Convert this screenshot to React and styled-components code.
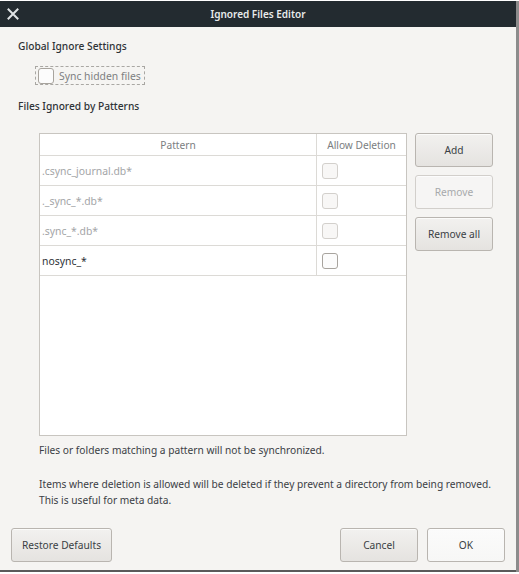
import React from "react";
import styled, { createGlobalStyle } from "styled-components";

const Global = createGlobalStyle`
  html, body { margin: 0; padding: 0; background: #8c8c8c; }
  body { font-family: "Noto Sans", "DejaVu Sans", sans-serif; }
  * { box-sizing: border-box; }
`;

const Frame = styled.div`
  width: 519px;
  height: 574px;
  padding-top: 1px;
  background: #ffffff;
  display: flex;
  flex-direction: column;
`;

const Window = styled.div`
  width: 516px;
  height: 571px;
  display: flex;
  flex-direction: column;
  background: #f5f4f2;
  border-bottom: 2px solid #5a5a5a;
  box-shadow: 3px 0 0 #8c8c8c;
`;

const TitleBar = styled.div`
  height: 26px;
  background: #232b30;
  display: grid;
  grid-template-columns: 40px 1fr 40px;
  align-items: center;
  color: #e8eaeb;
  font-size: 10px;
  font-weight: 600;
`;

const CloseBtn = styled.div`
  display: flex;
  align-items: center;
  padding-left: 7px;
`;

const Title = styled.div`
  text-align: center;
`;

const Body = styled.div`
  flex: 1;
  display: flex;
  flex-direction: column;
  padding: 11px 11px 0 18px;
  color: #31363b;
  font-size: 10.3px;
`;

const Heading = styled.div`
  font-size: 10.2px;
  font-weight: 500;
  height: 16px;
  line-height: 16px;
  color: #2e3236;
`;

const CheckRow = styled.div`
  margin: 12px 0 13px 17px;
  display: inline-flex;
  align-self: flex-start;
  align-items: center;
  gap: 5px;
  padding: 1px 3px 1px 2px;
  border: 1px dashed #a9a7a3;
  height: 19px;
  color: #7d7f81;
  font-size: 10.4px;
`;

const Box = styled.span`
  width: 16px;
  height: 16px;
  border: 1px solid ${(p) => (p.$dim ? "#d3d0cc" : "#a8a49e")};
  border-radius: 3px;
  background: ${(p) => (p.$dim ? "#f8f7f6" : "#fcfcfc")};
  display: inline-block;
  flex-shrink: 0;
`;

const MainRow = styled.div`
  display: flex;
  gap: 8px;
  margin: 19px 0 0 21px;
`;

const Table = styled.div`
  width: 368px;
  height: 303px;
  background: #ffffff;
  border: 1px solid #c8c5c0;
  display: flex;
  flex-direction: column;
`;

const Row = styled.div`
  display: grid;
  grid-template-columns: 277px 89px;
  height: ${(p) => (p.$head ? "22px" : "30px")};
  border-bottom: 1px solid #dcdad6;
`;

const Cell = styled.div`
  display: flex;
  align-items: center;
  justify-content: ${(p) => (p.$center ? "center" : "flex-start")};
  padding-left: ${(p) => (p.$center ? "0" : "2px")};
  border-right: ${(p) => (p.$last ? "none" : "1px solid #dcdad6")};
  font-size: 10.4px;
  color: ${(p) => (p.$dim ? "#a3a5a7" : "#2e3236")};
`;

const HeadCell = styled(Cell)`
  color: #7b7e81;
  font-size: 10.2px;
`;

const BoxCell = styled.div`
  display: flex;
  align-items: center;
  padding-left: 5px;
`;

const SideButtons = styled.div`
  display: flex;
  flex-direction: column;
  gap: 8px;
`;

const Button = styled.button`
  width: ${(p) => p.$w || 78}px;
  height: 34px;
  border: 1px solid ${(p) => (p.disabled ? "#d2cfcb" : "#b9b5b0")};
  border-radius: 3px;
  background: ${(p) =>
    p.disabled
      ? "#f6f5f4"
      : p.$light
      ? "linear-gradient(#fbfbfb, #f7f7f6)"
      : "linear-gradient(#f2f1ef, #e5e3e0)"};
  color: ${(p) => (p.disabled ? "#a7a9ab" : "#3a3f44")};
  font-family: "Noto Sans", "DejaVu Sans", sans-serif;
  font-size: 10.2px;
  padding: 0;
  box-shadow: inset 0 1px 0 rgba(255,255,255,0.7);
`;

const Note = styled.div`
  margin-left: 21px;
  font-size: 10.2px;
  line-height: 16px;
  color: #3b4045;
`;

const Footer = styled.div`
  margin-top: auto;
  display: flex;
  align-items: center;
  gap: 9px;
  padding: 0 0 8px 0;
  margin-left: -7px;
`;

const Spacer = styled.div`
  flex: 1;
`;

const rows = [
  { p: ".csync_journal.db*", dim: true },
  { p: "._sync_*.db*", dim: true },
  { p: ".sync_*.db*", dim: true },
  { p: "nosync_*", dim: false },
];

export default function App() {
  return (
    <>
      <Global />
      <Frame>
        <Window>
          <TitleBar>
            <CloseBtn>
              <svg width="12" height="12" viewBox="0 0 12 12">
                <path d="M1.5 1.5 L10.5 10.5 M10.5 1.5 L1.5 10.5" stroke="#dfe3e5" strokeWidth="2" strokeLinecap="square" />
              </svg>
            </CloseBtn>
            <Title>Ignored Files Editor</Title>
            <div />
          </TitleBar>
          <Body>
            <Heading>Global Ignore Settings</Heading>
            <CheckRow>
              <Box />
              <span>Sync hidden files</span>
            </CheckRow>
            <Heading>Files Ignored by Patterns</Heading>
            <MainRow>
              <Table>
                <Row $head>
                  <HeadCell $center>Pattern</HeadCell>
                  <HeadCell $center $last>Allow Deletion</HeadCell>
                </Row>
                {rows.map((r) => (
                  <Row key={r.p}>
                    <Cell $dim={r.dim}>{r.p}</Cell>
                    <BoxCell>
                      <Box $dim={r.dim} />
                    </BoxCell>
                  </Row>
                ))}
              </Table>
              <SideButtons>
                <Button>Add</Button>
                <Button disabled>Remove</Button>
                <Button>Remove all</Button>
              </SideButtons>
            </MainRow>
            <Note style={{ marginTop: 6 }}>Files or folders matching a pattern will not be synchronized.</Note>
            <Note style={{ marginTop: 18 }}>
              Items where deletion is allowed will be deleted if they prevent a directory from being removed.
              <br />
              This is useful for meta data.
            </Note>
            <Footer>
              <Button $w={101}>Restore Defaults</Button>
              <Spacer />
              <Button>Cancel</Button>
              <Button $light>OK</Button>
            </Footer>
          </Body>
        </Window>
      </Frame>
    </>
  );
}
